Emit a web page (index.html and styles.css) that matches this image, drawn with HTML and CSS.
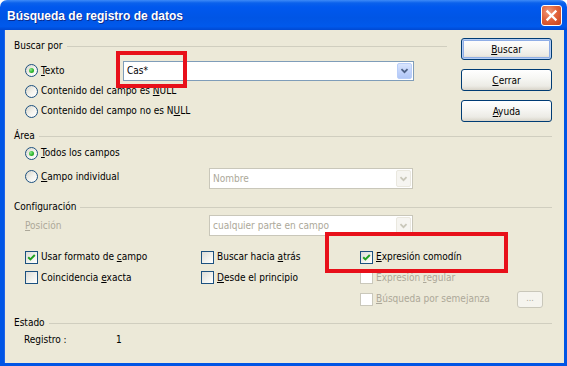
FILE: index.html
```html
<!DOCTYPE html>
<html lang="es">
<head>
<meta charset="utf-8">
<title>Búsqueda de registro de datos</title>
<link rel="stylesheet" href="styles.css">
</head>
<body>
<div class="window">
  <div class="titlebar">
    <span class="title">Búsqueda de registro de datos</span>
    <span class="close"><svg width="19" height="19" viewBox="0 0 19 19"><path d="M5.5 5.5 L13.5 13.5 M13.5 5.5 L5.5 13.5" stroke="#fff" stroke-width="2.4" stroke-linecap="square" fill="none"/></svg></span>
  </div>
  <div class="client">
    <div class="top">
      <div class="search">
        <div class="group-head"><span>Buscar por</span><i class="rule"></i></div>
        <div class="row row-text">
          <label class="opt opt-text"><span class="radio on"></span><span class="lbl"><u>T</u>exto</span></label>
          <div class="combo combo-text"><span class="value">Cas*</span><span class="drop"><svg width="15" height="15" viewBox="0 0 15 15"><path d="M4 6 L7.5 9.5 L11 6" stroke="#4D6185" stroke-width="2" fill="none"/></svg></span></div>
        </div>
        <div class="row"><label class="opt"><span class="radio"></span><span class="lbl">Contenido del campo es <u>N</u>ULL</span></label></div>
        <div class="row"><label class="opt"><span class="radio"></span><span class="lbl">Contenido del campo no es N<u>U</u>LL</span></label></div>
      </div>
      <div class="buttons">
        <button class="btn default"><u>B</u>uscar</button>
        <button class="btn"><u>C</u>errar</button>
        <button class="btn"><u>A</u>yuda</button>
      </div>
    </div>

    <div class="group-head full head-area"><span>Área</span><i class="rule"></i></div>
    <div class="row row-all"><label class="opt"><span class="radio on"></span><span class="lbl"><u>T</u>odos los campos</span></label></div>
    <div class="row row-field">
      <label class="opt opt-field"><span class="radio"></span><span class="lbl"><u>C</u>ampo individual</span></label>
      <div class="combo disabled combo-field"><span class="value">Nombre</span><span class="drop"><svg width="15" height="15" viewBox="0 0 15 15"><path d="M4 6 L7.5 9.5 L11 6" stroke="#C9C7BA" stroke-width="2" fill="none"/></svg></span></div>
    </div>

    <div class="group-head full head-conf"><span>Configuración</span><i class="rule"></i></div>
    <div class="row row-pos">
      <span class="pos-label dis-text"><u>P</u>osición</span>
      <div class="combo disabled combo-pos"><span class="value">cualquier parte en campo</span><span class="drop"><svg width="15" height="15" viewBox="0 0 15 15"><path d="M4 6 L7.5 9.5 L11 6" stroke="#C9C7BA" stroke-width="2" fill="none"/></svg></span></div>
    </div>

    <div class="checks">
      <label class="opt"><span class="check"><svg width="11" height="11" viewBox="0 0 11 11"><path d="M2.2 5.2 L4.4 7.4 L8.8 3" stroke="#21A121" stroke-width="2" fill="none"/></svg></span><span class="lbl">Usar formato de <u>c</u>ampo</span></label>
      <label class="opt"><span class="check"></span><span class="lbl">Buscar hacia <u>a</u>trás</span></label>
      <label class="opt"><span class="check"><svg width="11" height="11" viewBox="0 0 11 11"><path d="M2.2 5.2 L4.4 7.4 L8.8 3" stroke="#21A121" stroke-width="2" fill="none"/></svg></span><span class="lbl"><u>E</u>xpresión comodín</span></label>

      <label class="opt"><span class="check"></span><span class="lbl">Coincidencia <u>e</u>xacta</span></label>
      <label class="opt"><span class="check"></span><span class="lbl"><u>D</u>esde el principio</span></label>
      <label class="opt"><span class="check dis"></span><span class="lbl dis-text">Expresión <u>r</u>egular</span></label>

      <span></span>
      <span></span>
      <div class="opt opt-sim"><span class="check dis"></span><span class="lbl dis-text sim-text"><u>B</u>úsqueda por semejanza</span><span class="mini">...</span></div>
    </div>

    <div class="group-head full head-state"><span>Estado</span><i class="rule"></i></div>
    <div class="row row-reg"><span class="reg-label">Registro :</span><span>1</span></div>
  </div>

  <div class="mark mark-1"></div>
  <div class="mark mark-2"></div>
</div>
</body>
</html>
```

FILE: styles.css
```css
html, body {
  margin: 0;
  padding: 0;
  background: #ffffff;
}

body {
  font-family: "DejaVu Sans Condensed", "DejaVu Sans", sans-serif;
  font-stretch: condensed;
  font-size: 10px;
  color: #000;
}

.window {
  position: relative;
  width: 567px;
  height: 366px;
  display: flex;
  flex-direction: column;
  overflow: hidden;
}

.titlebar {
  height: 30px;
  flex: none;
  display: flex;
  align-items: center;
  justify-content: space-between;
  padding: 0 5px 0 7px;
  box-sizing: border-box;
  border-radius: 7px 7px 0 0;
  background: linear-gradient(#3D8AF7 0px, #0A61EC 3px, #0058EE 7px, #0055E5 60%, #0059EC 88%, #0049D2 100%);
}

.title {
  font-family: "Liberation Sans", Arial, sans-serif;
  font-stretch: normal;
  font-weight: bold;
  font-size: 12px;
  color: #fff;
  padding-top: 2px;
  text-shadow: 1px 1px 0 #0B2C8E;
}

.close {
  width: 21px;
  height: 21px;
  box-sizing: border-box;
  border: 1px solid #fff;
  border-radius: 3px;
  background: radial-gradient(circle at 35% 30%, #F09A7C 0%, #E2643C 45%, #C8411A 100%);
  display: flex;
  align-items: center;
  justify-content: center;
}

.client {
  flex: 1;
  display: flex;
  flex-direction: column;
  background: #ECE9D8;
  border-style: solid;
  border-color: #0055E5;
  border-width: 0 3px 3px 4px;
  box-shadow: inset 1px 0 0 #1D63E8;
}

.top {
  display: flex;
  height: 92px;
  flex: none;
}

.search {
  width: 443px;
  display: flex;
  flex-direction: column;
  padding-top: 10px;
}

.group-head {
  display: flex;
  align-items: center;
  height: 12px;
  line-height: 12px;
  padding-left: 10px;
  flex: none;
}

.group-head.full {
  padding-right: 12px;
}

.rule {
  flex: 1;
  height: 1px;
  margin-left: 4px;
  background: #D0CEBF;
}

.row {
  display: flex;
  align-items: center;
  height: 20px;
  padding-left: 21px;
  flex: none;
}

.opt {
  display: flex;
  align-items: center;
  height: 13px;
  line-height: 12px;
  white-space: nowrap;
}

.lbl {
  margin-left: 3px;
}

.row-text {
  margin-top: 8px;
  height: 21px;
}

.opt-text {
  width: 98px;
}

.radio {
  position: relative;
  flex: none;
  width: 13px;
  height: 13px;
  box-sizing: border-box;
  border-radius: 50%;
  border: 1px solid #1C5180;
  background: linear-gradient(135deg, #D8D6CB 0%, #F4F3EE 55%, #FFFFFF 100%);
}

.radio.on::after {
  content: "";
  position: absolute;
  left: 3px;
  top: 3px;
  width: 5px;
  height: 5px;
  border-radius: 50%;
  background: radial-gradient(circle at 35% 35%, #8BEA8B 0%, #2DB52D 55%, #1C8F1C 100%);
}

.check {
  flex: none;
  width: 13px;
  height: 13px;
  box-sizing: border-box;
  border: 1px solid #1C5180;
  background: linear-gradient(135deg, #DCDCD7 0%, #F3F3EF 60%, #FFFFFF 100%);
  display: flex;
  align-items: center;
  justify-content: center;
}

.check.dis {
  border-color: #CAC8BB;
  background: #FFFFFF;
}

.dis-text {
  color: #ACA899;
}

.combo {
  position: relative;
  box-sizing: border-box;
  height: 20px;
  border: 1px solid #7F9DB9;
  background: #fff;
  display: flex;
  align-items: center;
  padding-left: 3px;
  line-height: 12px;
}

.combo .drop {
  position: absolute;
  right: 1px;
  top: 1px;
  bottom: 1px;
  width: 15px;
  box-sizing: border-box;
  border: 1px solid #B9CEF9;
  border-radius: 2px;
  background: linear-gradient(#D9E5FD 0%, #C3D4FB 50%, #B1C7F6 100%);
  display: flex;
  align-items: center;
  justify-content: center;
}

.combo.disabled {
  border-color: #C9C7BA;
  color: #ACA899;
  height: 21px;
}

.combo.disabled .drop {
  border-color: #EAE8DF;
  background: #F6F5F1;
}

.combo-text {
  width: 291px;
}

.buttons {
  display: flex;
  flex-direction: column;
  gap: 9px;
  margin-left: 14px;
  padding-top: 8px;
}

.btn {
  width: 91px;
  height: 22px;
  box-sizing: border-box;
  padding: 0;
  margin: 0;
  font: inherit;
  font-stretch: condensed;
  color: #000;
  border: 1px solid #003C74;
  border-radius: 3px;
  background: linear-gradient(#FFFFFF 0%, #F7F7F4 40%, #ECEBE5 80%, #D8D4C9 100%);
}

.btn.default {
  box-shadow: inset 0 0 0 1px #B5CDF3, inset 0 0 0 2px #8FAEE6;
}

.head-area {
  margin-top: 8px;
}

.row-all {
  margin-top: 1px;
}

.row-field {
  margin-top: 3px;
  height: 23px;
  align-items: flex-start;
}

.opt-field {
  width: 184px;
  margin-top: 4px;
}

.combo-field {
  width: 204px;
  margin-top: 2px;
}

.head-conf {
  margin-top: 12px;
}

.row-pos {
  margin-top: 2px;
  height: 21px;
}

.pos-label {
  width: 184px;
  line-height: 12px;
}

.combo-pos {
  width: 204px;
}

.checks {
  display: grid;
  grid-template-columns: 176px 159px 1fr;
  grid-template-rows: 20px 21px 22px;
  align-items: center;
  margin-top: 11px;
  padding-left: 21px;
  flex: none;
}

.opt-sim {
  height: 17px;
}

.sim-text {
  width: 141px;
}

.mini {
  width: 26px;
  height: 17px;
  box-sizing: border-box;
  border: 1px solid #C9C7BA;
  border-radius: 3px;
  background: #F5F4EE;
  color: #ACA899;
  font-size: 9px;
  line-height: 13px;
  text-align: center;
}

.head-state {
  margin-top: 7px;
}

.row-reg {
  margin-top: 5px;
  height: 12px;
  line-height: 12px;
  padding-left: 20px;
}

.reg-label {
  width: 92px;
}

.mark {
  position: absolute;
  box-sizing: border-box;
  border: 4px solid #E8101A;
}

.mark-1 {
  left: 116px;
  top: 51px;
  width: 71px;
  height: 37px;
}

.mark-2 {
  left: 325px;
  top: 232px;
  width: 183px;
  height: 41px;
}
```
